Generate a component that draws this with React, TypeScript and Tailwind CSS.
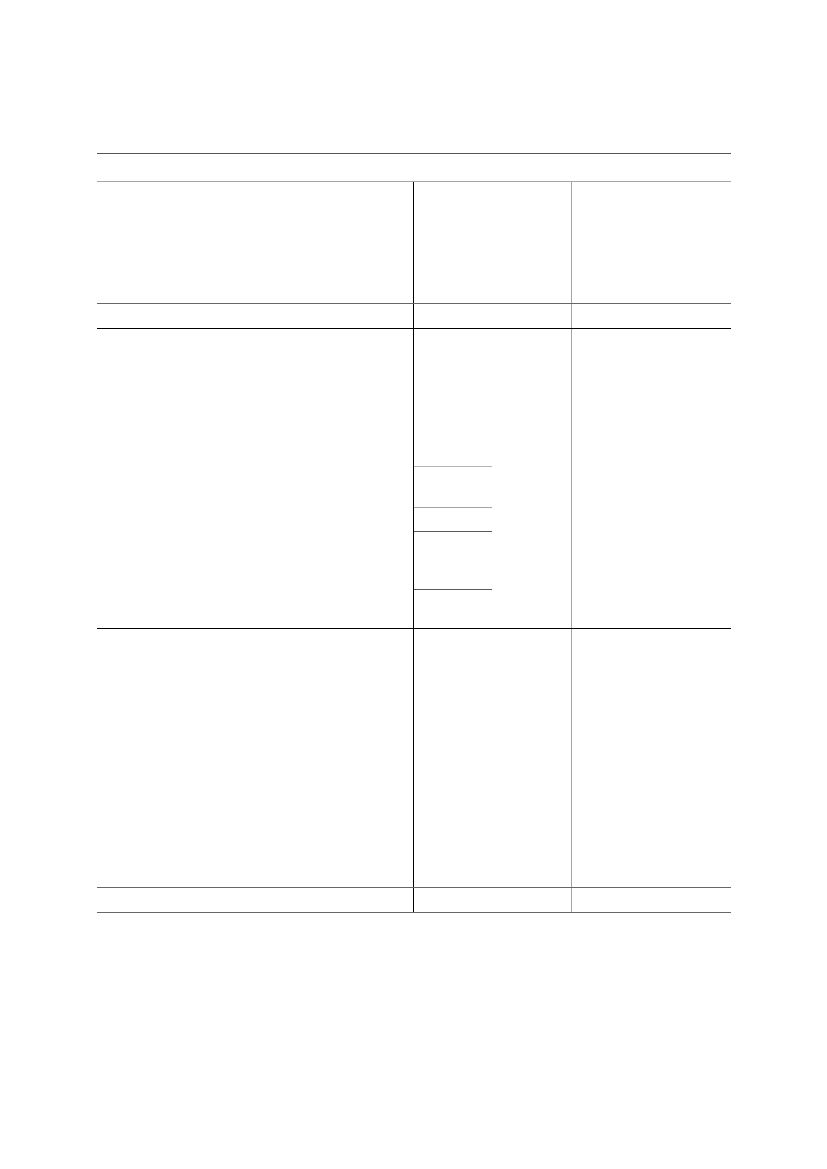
export default function App() {
  return (
    <div className="min-h-[1169px] w-full bg-white pt-[153px] font-['Liberation_Sans',Arial,sans-serif]">
      <div className="ml-[97px] w-[634px]">
        {/* caption rule + header strip */}
        <div className="h-[29px] border-t border-b border-t-[#555555] border-b-[#a6a6a6]" />

        {/* header row */}
        <div className="flex h-[122px] border-b border-[#666666]">
          <div className="w-[317px] border-r border-black" />
          <div className="w-[158px] border-r border-[#a3a3a3]" />
          <div className="flex-1" />
        </div>

        {/* unit row */}
        <div className="flex h-[25px] border-b border-black">
          <div className="w-[317px] border-r border-black" />
          <div className="w-[158px] border-r border-[#a3a3a3]" />
          <div className="flex-1" />
        </div>

        {/* body row 1 */}
        <div className="flex h-[300px] border-b border-black">
          <div className="w-[317px] border-r border-black" />
          <div className="w-[158px] border-r border-[#a3a3a3]">
            <div className="flex w-[78px] flex-col">
              <div className="h-[138px] border-b border-[#b4b4b4]" />
              <div className="h-[41px] border-b border-[#a3a3a3]" />
              <div className="h-[24px] border-b border-[#5a5a5a]" />
              <div className="h-[58px] border-b border-[#5a5a5a]" />
            </div>
          </div>
          <div className="flex-1" />
        </div>

        {/* body row 2 */}
        <div className="flex h-[259px] border-b border-[#666666]">
          <div className="w-[317px] border-r border-black" />
          <div className="w-[158px] border-r border-[#a3a3a3]" />
          <div className="flex-1" />
        </div>

        {/* footer row */}
        <div className="flex h-[25px] border-b border-[#666666]">
          <div className="w-[317px] border-r border-black" />
          <div className="w-[158px] border-r border-[#a3a3a3]" />
          <div className="flex-1" />
        </div>
      </div>
    </div>
  );
}
